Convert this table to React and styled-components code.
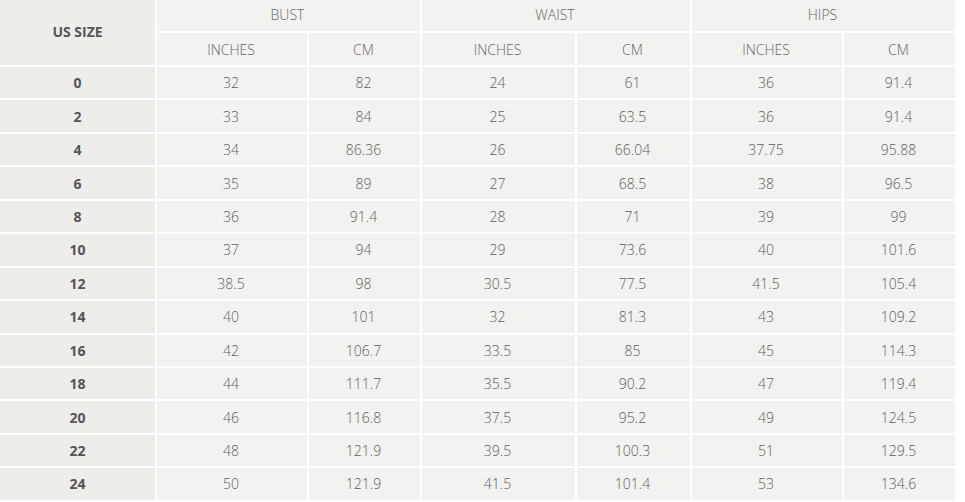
import styled, { createGlobalStyle } from "styled-components";

const GlobalStyle = createGlobalStyle`
  body {
    margin: 0;
    background: #ffffff;
    font-family: "Open Sans", "Noto Sans", sans-serif;
  }
`;

const Grid = styled.div`
  display: grid;
  width: 955px;
  grid-template-columns: 155px 150px 111px 153px 113px 150px 111px;
  grid-template-rows: 31px 32px;
  grid-auto-rows: 31.45px;
  gap: 2px;
  background: #ffffff;
`;

const Cell = styled.div`
  display: flex;
  align-items: center;
  justify-content: center;
  background: ${(props) => (props.$size ? "#edede9" : "#f2f2f0")};
  color: ${(props) => (props.$size ? "#555555" : "#5e5e5e")};
  font-size: 14px;
  font-weight: ${(props) => (props.$size ? 700 : 300)};
  padding-right: ${(props) => (props.$size ? "0" : "2px")};
`;

const HeadCell = styled(Cell)`
  color: #666666;
  font-weight: 300;
`;

const SizeHead = styled(Cell)`
  grid-row: span 2;
  padding-bottom: 2px;
`;

const GroupHead = styled(HeadCell)`
  grid-column: span 2;
  align-items: flex-start;
  padding-top: 5px;
`;

const rows = [
  ["0", "32", "82", "24", "61", "36", "91.4"],
  ["2", "33", "84", "25", "63.5", "36", "91.4"],
  ["4", "34", "86.36", "26", "66.04", "37.75", "95.88"],
  ["6", "35", "89", "27", "68.5", "38", "96.5"],
  ["8", "36", "91.4", "28", "71", "39", "99"],
  ["10", "37", "94", "29", "73.6", "40", "101.6"],
  ["12", "38.5", "98", "30.5", "77.5", "41.5", "105.4"],
  ["14", "40", "101", "32", "81.3", "43", "109.2"],
  ["16", "42", "106.7", "33.5", "85", "45", "114.3"],
  ["18", "44", "111.7", "35.5", "90.2", "47", "119.4"],
  ["20", "46", "116.8", "37.5", "95.2", "49", "124.5"],
  ["22", "48", "121.9", "39.5", "100.3", "51", "129.5"],
  ["24", "50", "121.9", "41.5", "101.4", "53", "134.6"],
];

const App = () => {
  return (
    <>
      <GlobalStyle />
      <Grid>
        <SizeHead $size>US SIZE</SizeHead>
        <GroupHead>BUST</GroupHead>
        <GroupHead>WAIST</GroupHead>
        <GroupHead>HIPS</GroupHead>
        {["b", "w", "h"].map((k) => [
          <HeadCell key={k + "i"}>INCHES</HeadCell>,
          <HeadCell key={k + "c"}>CM</HeadCell>,
        ])}
        {rows.map((r) =>
          r.map((v, i) => (
            <Cell key={r[0] + "-" + i} $size={i === 0}>
              {v}
            </Cell>
          ))
        )}
      </Grid>
    </>
  );
};

export default App;
